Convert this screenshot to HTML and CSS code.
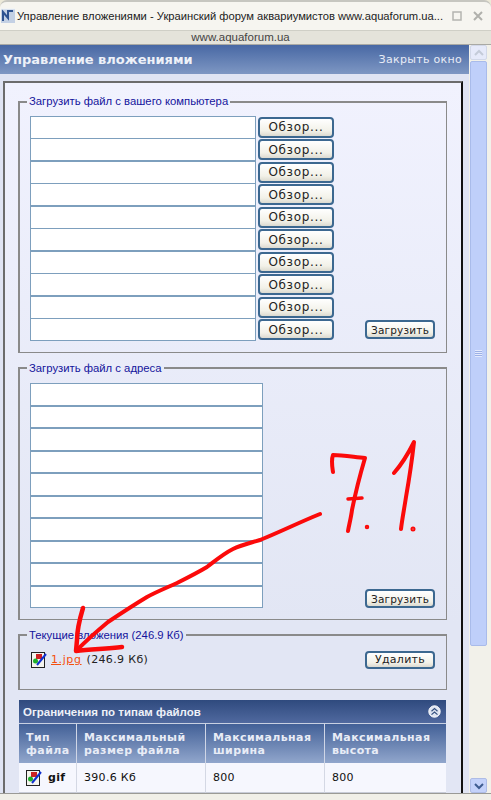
FILE: index.html
```html
<!DOCTYPE html>
<html lang="ru">
<head>
<meta charset="utf-8">
<title>Управление вложениями</title>
<link rel="stylesheet" href="styles.css">
</head>
<body>
<div class="window">
  <div class="titlebar">
    <svg class="appicon" width="14" height="16" viewBox="0 0 14 16"><rect x="0" y="1" width="14" height="14" fill="#c3d0e4"/><path d="M2 13V4l5 6V3h5" fill="none" stroke="#2e5390" stroke-width="2"/><path d="M0 1h14" stroke="#eef2f8"/></svg>
    <span class="titletext">Управление вложениями - Украинский форум аквариумистов www.aquaforum.ua...</span>
    <svg class="winbtn" width="12" height="12" viewBox="0 0 12 12"><rect x="2" y="2" width="8" height="8" fill="none" stroke="#b4b4b0" stroke-width="1.5"/></svg>
    <svg class="winbtn winclose" width="12" height="12" viewBox="0 0 12 12"><path d="M2 2l8 8M10 2l-8 8" stroke="#b0b0ac" stroke-width="2"/></svg>
  </div>
  <div class="addressbar">www.aquaforum.ua</div>
  <div class="viewport">
    <div class="page">
      <div class="pagehead">
        <span class="pagetitle">Управление вложениями</span>
        <span class="closelink">Закрыть окно</span>
      </div>
      <div class="panel">
        <fieldset class="group group-local">
          <legend>Загрузить файл с вашего компьютера</legend>
          <div class="localrows">
            <div class="filerow"><input class="field" type="text"><button class="btn browse">Обзор...</button></div>
            <div class="filerow"><input class="field" type="text"><button class="btn browse">Обзор...</button></div>
            <div class="filerow"><input class="field" type="text"><button class="btn browse">Обзор...</button></div>
            <div class="filerow"><input class="field" type="text"><button class="btn browse">Обзор...</button></div>
            <div class="filerow"><input class="field" type="text"><button class="btn browse">Обзор...</button></div>
            <div class="filerow"><input class="field" type="text"><button class="btn browse">Обзор...</button></div>
            <div class="filerow"><input class="field" type="text"><button class="btn browse">Обзор...</button></div>
            <div class="filerow"><input class="field" type="text"><button class="btn browse">Обзор...</button></div>
            <div class="filerow"><input class="field" type="text"><button class="btn browse">Обзор...</button></div>
            <div class="filerow lastrow"><input class="field" type="text"><button class="btn browse">Обзор...</button><button class="btn upload">Загрузить</button></div>
          </div>
        </fieldset>
        <fieldset class="group group-url">
          <legend>Загрузить файл с адреса</legend>
          <div class="urlwrap">
            <div class="urlrows">
              <input class="field urlfield" type="text"><input class="field urlfield" type="text"><input class="field urlfield" type="text"><input class="field urlfield" type="text"><input class="field urlfield" type="text"><input class="field urlfield" type="text"><input class="field urlfield" type="text"><input class="field urlfield" type="text"><input class="field urlfield" type="text"><input class="field urlfield" type="text">
            </div>
            <button class="btn upload">Загрузить</button>
          </div>
        </fieldset>
        <fieldset class="group group-current">
          <legend>Текущие вложения (246.9 Кб)</legend>
          <div class="attachrow">
            <svg class="fileicon" width="16" height="16" viewBox="0 0 16 16"><rect x="0.5" y="0.5" width="13" height="15" fill="#f4f4ee" stroke="#222"/><rect x="5" y="2" width="6" height="5" fill="#c22"/><circle cx="4.5" cy="9" r="2.5" fill="#1fae2c"/><path d="M6 13L15 2" stroke="#1030d0" stroke-width="2"/></svg>
            <a class="attachlink" href="#">1.jpg</a>
            <span class="attachsize">(246.9 Кб)</span>
            <button class="btn remove">Удалить</button>
          </div>
        </fieldset>
        <div class="limits">
          <div class="limitshead">
            <span>Ограничения по типам файлов</span>
            <svg width="13" height="13" viewBox="0 0 13 13"><circle cx="6.5" cy="6.5" r="5.7" fill="#dfe5f2" stroke="#fff"/><path d="M3.5 6.2l3-2.6 3 2.6M3.5 9.6l3-2.6 3 2.6" fill="none" stroke="#34507f" stroke-width="1.2"/></svg>
          </div>
          <table class="limitstable">
            <thead>
              <tr><th class="c1">Тип файла</th><th class="c2">Максимальный размер файла</th><th class="c3">Максимальная ширина</th><th class="c4">Максимальная высота</th></tr>
            </thead>
            <tbody>
              <tr>
                <td class="typecell"><svg class="fileicon" width="16" height="16" viewBox="0 0 16 16"><rect x="0.5" y="0.5" width="13" height="15" fill="#f4f4ee" stroke="#222"/><rect x="5" y="2" width="6" height="5" fill="#c22"/><circle cx="4.5" cy="9" r="2.5" fill="#1fae2c"/><path d="M6 13L15 2" stroke="#1030d0" stroke-width="2"/></svg><b>gif</b></td>
                <td>390.6 Кб</td><td>800</td><td>800</td>
              </tr>
            </tbody>
          </table>
        </div>
      </div>
    </div>
    <div class="scrollbar">
      <div class="sbtn"><svg width="12" height="8" viewBox="0 0 12 8"><path d="M2 6l4-4 4 4" fill="none" stroke="#c4cbd8" stroke-width="2"/></svg></div>
      <div class="thumb"><span class="grip"></span></div>
      <div class="track"></div>
      <div class="sbtn sbtn-down"><svg width="12" height="8" viewBox="0 0 12 8"><path d="M2 2l4 4 4-4" fill="none" stroke="#3e5c90" stroke-width="2"/></svg></div>
    </div>
  </div>
  <div class="bottomframe"></div>
  <svg class="scribble" width="491" height="800" viewBox="0 0 491 800">
    <g fill="none" stroke="#fb0a0a" stroke-linecap="round" stroke-linejoin="round">
      <path stroke-width="4" d="M320 514C300 522 280 532 260 540C250 543 241 545 233 549C223 554 215 561 207 567C197 573 187 578 177 583C166 588 156 592 147 597C132 606 120 614 108 622C96 632 86 641 77 650"/>
      <path stroke-width="4.5" d="M83 608C80 618 77 628 77 640L76 651C90 649 106 649 122 647"/>
      <path stroke-width="4" d="M333 472C332 465 331 460 333 455C343 455 354 457 365 458C360 475 354 500 352 510C351 518 349 525 348 531"/>
      <path stroke-width="3.5" d="M348 499L362 498"/>
      <path stroke-width="4" d="M394 473C402 464 408 454 414 442C412 460 409 480 406 497C404 510 402 520 401 529"/>
      <circle cx="367" cy="527" r="1" stroke-width="2.5"/>
      <circle cx="413" cy="529" r="1" stroke-width="3"/>
    </g>
  </svg>
</div>
</body>
</html>
```

FILE: styles.css
```css
html, body { margin: 0; padding: 0; }
body { font-family: "DejaVu Sans", Verdana, sans-serif; background: #fff; }
.window { position: relative; width: 491px; height: 800px; display: flex; flex-direction: column; overflow: hidden; background: #ece9d8; }
.titlebar { height: 30px; flex: none; display: flex; align-items: center; padding: 0 8px 0 1px; box-sizing: border-box; background: #f6f5f0; border-top: 2px solid #c6c6c0; border-radius: 7px 7px 0 0; color: #222; font-family: "Liberation Sans", Arial, sans-serif; font-size: 11.2px; }
.appicon { flex: none; margin-right: 2px; }
.titletext { flex: 1; white-space: nowrap; }
.winbtn { flex: none; margin-left: 8px; }
.winclose { margin-left: 9px; }
.addressbar { height: 14px; flex: none; box-sizing: border-box; line-height: 13px; padding-right: 10px; text-align: center; font-family: "Liberation Sans", Arial, sans-serif; font-size: 11.5px; color: #444; background: #e4e3da; border-top: 1px solid #cfcfc6; }
.viewport { flex: 1; min-height: 0; display: flex; border-top: 1px solid #a9a9a4; }
.page { flex: none; width: 469px; overflow: hidden; background: #e0e4f3; }
.pagehead { height: 29px; box-sizing: border-box; display: flex; align-items: center; justify-content: space-between; padding: 0 7px 0 3px; background: linear-gradient(#4868a4, #7e97c3); color: #fff; }
.pagetitle { font-size: 13px; font-weight: bold; color: #eef1f8; }
.closelink { font-size: 11px; letter-spacing: 0.3px; color: #e8ecf6; }
.panel { margin: 7px 6px 0 3px; height: 712px; box-sizing: border-box; padding: 12px 14px 0 13px; background: linear-gradient(#f1f2fe, #e2e6f4 540px); border: 2px solid #6c6c6c; border-right-color: #111; border-bottom: 0; }
.group { margin: 0; padding: 0; border: 1px solid #8a8a8a; border-top-width: 2px; border-left-width: 2px; box-sizing: border-box; min-width: 0; }
.group legend { margin-left: 7px; padding: 0 2px; font-family: "Liberation Sans", Arial, sans-serif; font-size: 11.3px; line-height: 13px; color: #14149c; white-space: nowrap; }
.group-local { height: 257.5px; }
.localrows { display: flex; flex-direction: column; padding: 8px 0 0 10px; }
.filerow { height: 22.5px; display: flex; align-items: center; }
.field { display: block; box-sizing: border-box; width: 226px; height: 23px; margin: 0; padding: 0; background: #fff; border: 1px solid #7d9fbd; border-radius: 0; flex: none; }
.btn { box-sizing: border-box; padding: 0; margin: 0; border: 2px solid #3c6890; border-radius: 4px; background: linear-gradient(#fff, #f2f1e8 70%, #dcdad0); color: #222; font-family: "DejaVu Sans", Verdana, sans-serif; flex: none; }
.browse { width: 76px; height: 21px; margin-left: 2px; font-size: 12px; letter-spacing: 0.7px; }
.upload { width: 70px; height: 19px; font-size: 10.5px; letter-spacing: 0.2px; }
.lastrow .upload { margin-left: 31px; }
.group-url { height: 258.5px; margin-top: 9px; }
.urlwrap { display: flex; justify-content: space-between; align-items: flex-end; padding: 8.5px 11px 0 10px; }
.urlrows { display: flex; flex-direction: column; }
.urlfield { width: 233px; height: 22.5px; }
.group-current { height: 61.5px; margin-top: 8.5px; }
.attachrow { display: flex; align-items: center; height: 22px; padding: 7px 11px 0 11px; font-size: 11px; letter-spacing: 0.35px; color: #222; }
.fileicon { flex: none; }
.attachlink { margin-left: 4px; color: #f4500f; letter-spacing: 0.6px; }
.attachsize { margin-left: 5px; flex: 1; }
.remove { width: 70px; height: 18px; font-size: 11px; letter-spacing: 0.3px; }
.limits { margin: 10px 0 0 1px; width: 427px; }
.limitshead { height: 23px; display: flex; align-items: center; justify-content: space-between; padding: 0 5px 0 4px; background: linear-gradient(#2f4a7e, #50699f); color: #eef1f8; font-family: "Liberation Sans", Arial, sans-serif; font-size: 11.5px; font-weight: bold; }
.limitstable { width: 427px; table-layout: fixed; border-collapse: separate; border-spacing: 0; font-size: 11px; }
.limitstable th { height: 40px; box-sizing: border-box; padding: 0 6px 0 7px; text-align: left; vertical-align: middle; font-size: 11px; line-height: 13px; letter-spacing: 0.4px; color: #e8ecf6; background: linear-gradient(#426097, #91a6cc); border-top: 1px solid #c8d0e2; border-right: 1px solid #d0d6e6; }
.limitstable th.c1 { width: 58px; }
.limitstable th.c2 { width: 129px; }
.limitstable th.c3 { width: 119px; }
.limitstable th.c4 { border-right: 0; }
.limitstable td { height: 30px; box-sizing: border-box; padding: 0 6px 0 7px; background: #f6f7fe; color: #111; letter-spacing: 0.3px; border-right: 1px solid #d4d8e4; border-bottom: 1px solid #c8ccd8; }
.limitstable td:last-child { border-right: 0; }
.limitstable .typecell { white-space: nowrap; padding-right: 0; }
.typecell .fileicon { vertical-align: middle; margin-right: 6px; }
.typecell b { font-size: 11px; }
.scrollbar { flex: 1; display: flex; flex-direction: column; padding: 0 4px 0 1px; background: #f2f1ea; }
.sbtn { height: 15px; flex: none; display: flex; align-items: center; justify-content: center; background: #e6eafa; border: 1px solid #d2d8e8; border-radius: 2px; box-sizing: border-box; }
.sbtn-down { background: #c4d2fa; border-color: #aebce6; }
.thumb { height: 585px; flex: none; margin-top: 1px; display: flex; align-items: center; justify-content: center; background: #bfcffa; border: 1px solid #a9bbea; border-radius: 2px; box-sizing: border-box; }
.grip { width: 7px; height: 7px; background: repeating-linear-gradient(#e4eafd 0 1px, #9cb0e6 1px 2px); }
.track { flex: 1; }
.bottomframe { height: 7px; flex: none; background: #f0efe8; border-top: 1px solid #9a9a96; box-sizing: border-box; }
.scribble { position: absolute; left: 0; top: 0; pointer-events: none; }
```
